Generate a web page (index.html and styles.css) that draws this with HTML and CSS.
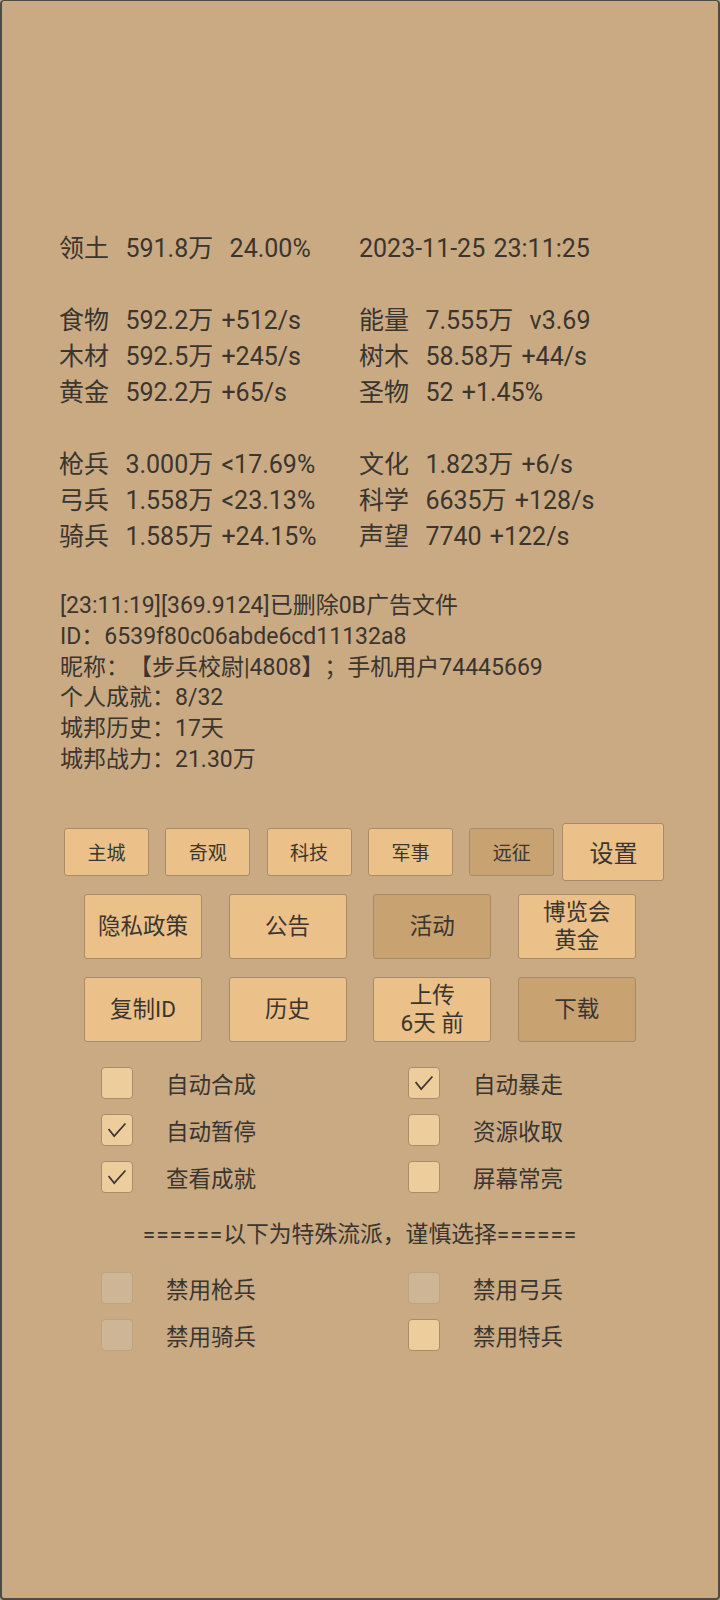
FILE: index.html
```html
<!DOCTYPE html>
<html lang="zh">
<head>
<meta charset="utf-8">
<title>城邦</title>
<link rel="stylesheet" href="styles.css">
</head>
<body>
<div class="screen">
  <div class="stats">
    <div class="cell">领土  591.8万  24.00%</div>
    <div class="cell">2023-11-25 23:11:25</div>
    <div class="gap"></div>
    <div class="cell">食物  592.2万 +512/s</div>
    <div class="cell">能量  7.555万  v3.69</div>
    <div class="cell">木材  592.5万 +245/s</div>
    <div class="cell">树木  58.58万 +44/s</div>
    <div class="cell">黄金  592.2万 +65/s</div>
    <div class="cell">圣物  52 +1.45%</div>
    <div class="gap"></div>
    <div class="cell">枪兵  3.000万 &lt;17.69%</div>
    <div class="cell">文化  1.823万 +6/s</div>
    <div class="cell">弓兵  1.558万 &lt;23.13%</div>
    <div class="cell">科学  6635万 +128/s</div>
    <div class="cell">骑兵  1.585万 +24.15%</div>
    <div class="cell">声望  7740 +122/s</div>
  </div>

  <div class="info">
    <div>[23:11:19][369.9124]已删除0B广告文件</div>
    <div>ID：6539f80c06abde6cd11132a8</div>
    <div>昵称：【步兵校尉|4808】；手机用户74445669</div>
    <div>个人成就：8/32</div>
    <div>城邦历史：17天</div>
    <div>城邦战力：21.30万</div>
  </div>

  <div class="tabs">
    <div class="tab">主城</div>
    <div class="tab">奇观</div>
    <div class="tab">科技</div>
    <div class="tab">军事</div>
    <div class="tab dark">远征</div>
    <div class="tab big">设置</div>
  </div>

  <div class="btns">
    <div class="btn">隐私政策</div>
    <div class="btn">公告</div>
    <div class="btn dark">活动</div>
    <div class="btn two">博览会<br>黄金</div>
    <div class="btn">复制ID</div>
    <div class="btn">历史</div>
    <div class="btn two">上传<br>6天 前</div>
    <div class="btn dark">下载</div>
  </div>

  <div class="checks">
    <div class="chk"><span class="box"></span><span class="lbl">自动合成</span></div>
    <div class="chk"><span class="box"><svg viewBox="0 0 32 32"><polyline points="7,15 13,22.5 25,9"/></svg></span><span class="lbl">自动暴走</span></div>
    <div class="chk"><span class="box"><svg viewBox="0 0 32 32"><polyline points="7,15 13,22.5 25,9"/></svg></span><span class="lbl">自动暂停</span></div>
    <div class="chk"><span class="box"></span><span class="lbl">资源收取</span></div>
    <div class="chk"><span class="box"><svg viewBox="0 0 32 32"><polyline points="7,15 13,22.5 25,9"/></svg></span><span class="lbl">查看成就</span></div>
    <div class="chk"><span class="box"></span><span class="lbl">屏幕常亮</span></div>
  </div>

  <div class="sep"><span class="eq">======</span>以下为特殊流派，谨慎选择<span class="eq">======</span></div>

  <div class="checks">
    <div class="chk"><span class="box off"></span><span class="lbl">禁用枪兵</span></div>
    <div class="chk"><span class="box off"></span><span class="lbl">禁用弓兵</span></div>
    <div class="chk"><span class="box off"></span><span class="lbl">禁用骑兵</span></div>
    <div class="chk"><span class="box"></span><span class="lbl">禁用特兵</span></div>
  </div>
</div>
</body>
</html>
```

FILE: styles.css
```css
* { box-sizing: border-box; }

html, body {
  margin: 0;
  padding: 0;
}

body {
  width: 720px;
  height: 1600px;
  font-family: Roboto, "Noto Sans CJK SC", sans-serif;
  color: #3a352f;
  background: #c9aa83;
  text-spacing-trim: space-all;
}

.screen {
  width: 720px;
  height: 1600px;
  border: 2px solid #4d4b48;
  border-top-width: 1px;
  border-radius: 4px;
  background: #c9aa83;
  overflow: hidden;
}

.stats {
  display: grid;
  grid-template-columns: 300px 1fr;
  margin: 230px 0 0 57px;
  font-size: 25px;
  line-height: 36px;
  word-spacing: 2px;
}

.stats .cell {
  white-space: pre;
}

.stats .gap {
  grid-column: 1 / span 2;
  height: 36px;
}

.info {
  margin: 36px 0 0 58px;
  font-size: 23px;
  line-height: 30.8px;
}

.tabs {
  display: flex;
  align-items: center;
  margin: 47px 0 0 62px;
}

.tab {
  width: 85px;
  height: 48px;
  margin-right: 16.3px;
  display: flex;
  align-items: center;
  justify-content: center;
  font-size: 19px;
  background: #ebc089;
  border: 1px solid #a78a68;
  border-radius: 3px;
}

.tab.big {
  width: 102px;
  height: 58px;
  margin-left: -8px;
  font-size: 24px;
}

.dark {
  background: #c9a272 !important;
}

.btns {
  display: grid;
  grid-template-columns: repeat(4, 118px);
  column-gap: 26.6px;
  row-gap: 18px;
  margin: 13px 0 0 82px;
}

.btn {
  height: 65px;
  display: flex;
  align-items: center;
  justify-content: center;
  text-align: center;
  font-size: 22.5px;
  line-height: 28px;
  background: #ebc089;
  border: 1px solid #a78a68;
  border-radius: 3px;
}

.checks {
  display: grid;
  grid-template-columns: 307px 1fr;
  row-gap: 15px;
  margin: 25px 0 0 99px;
}

.chk {
  display: flex;
  align-items: center;
  height: 32px;
}

.box {
  width: 32px;
  height: 32px;
  flex: none;
  background: #eecd9d;
  border: 1px solid #a98c6a;
  border-radius: 4px;
  display: flex;
}

.box.off {
  background: #cdb596;
  border-color: #bca383;
}

.box svg {
  width: 30px;
  height: 30px;
}

.box polyline {
  fill: none;
  stroke: #3a352f;
  stroke-width: 1.8;
}

.lbl {
  margin-left: 33px;
  font-size: 22.5px;
}

.sep {
  margin: 27px 0 0 0;
  text-align: center;
  font-size: 22.8px;
  line-height: 30px;
}

.sep .eq {
  letter-spacing: 0.9px;
}

.sep + .checks {
  margin-top: 22px;
}
```
